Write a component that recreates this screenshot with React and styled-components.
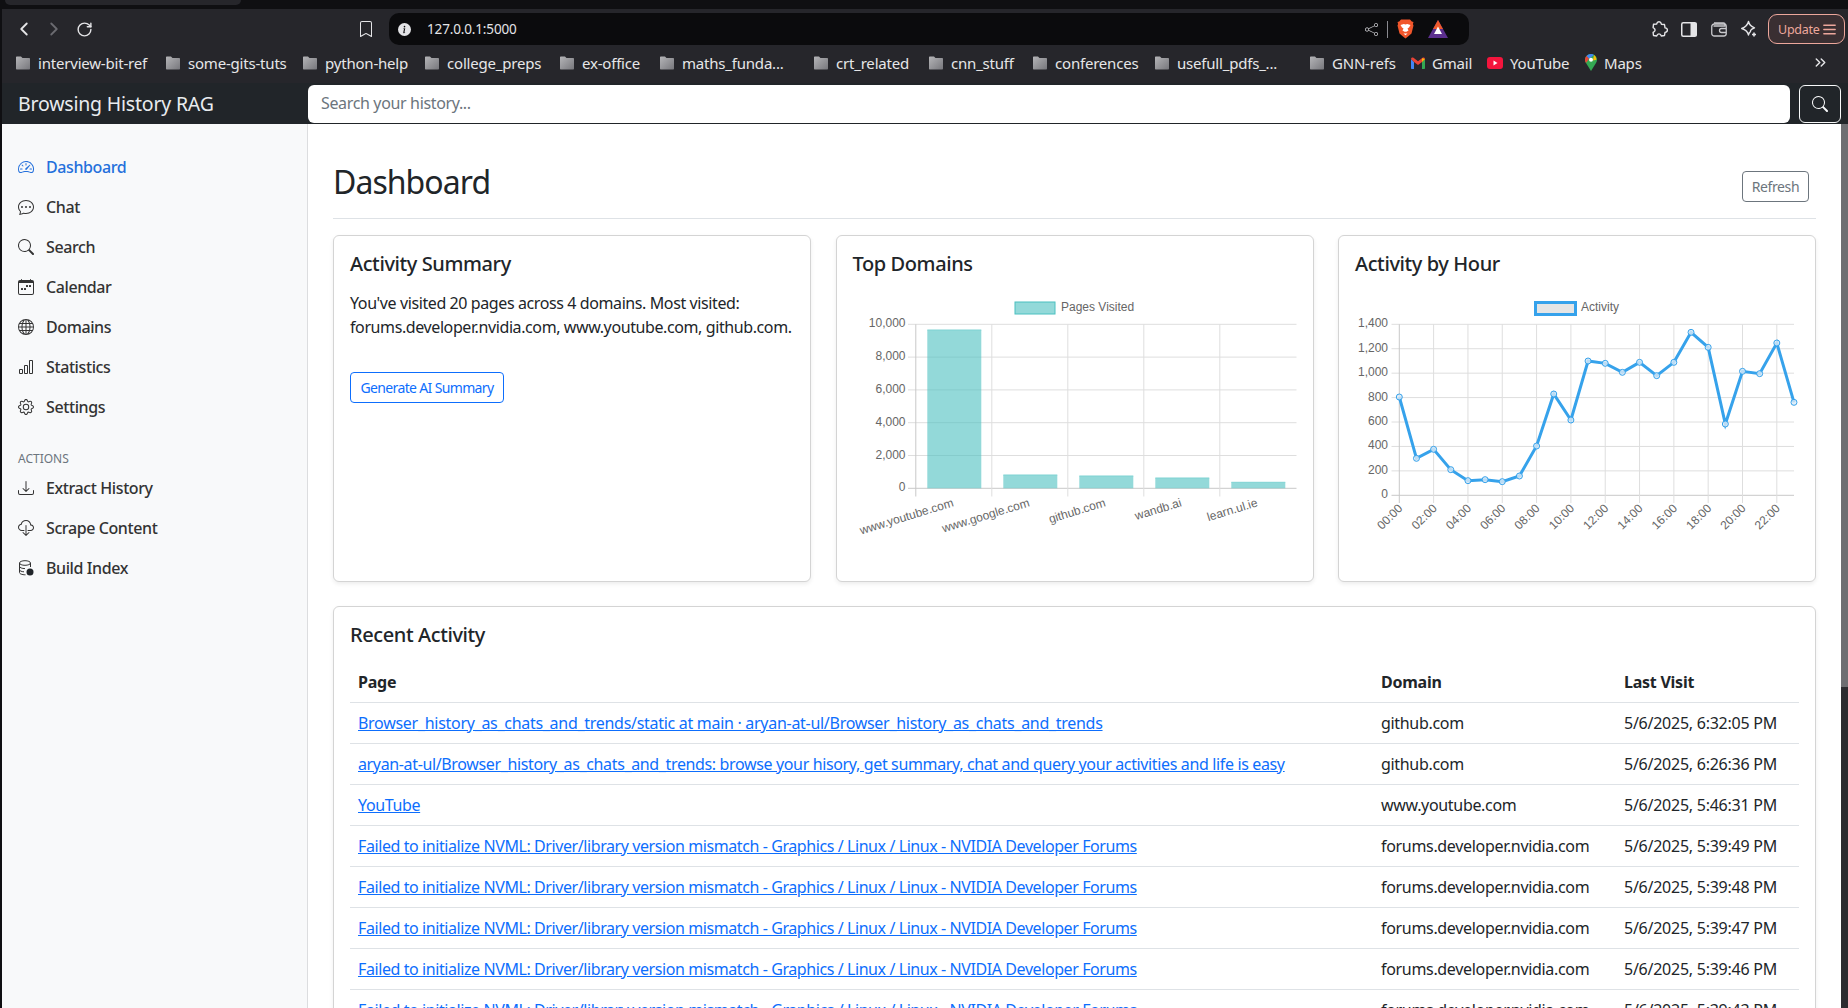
import styled, { createGlobalStyle } from "styled-components";
import {
  BsSpeedometer2,
  BsChatDots,
  BsSearch,
  BsCalendarWeek,
  BsGlobe,
  BsBarChart,
  BsGear,
  BsDownload,
  BsCloudDownload,
  BsInfoCircleFill,
  BsBookmark,
  BsShare,
} from "react-icons/bs";
import { LuChevronLeft, LuChevronRight, LuRotateCw, LuMenu, LuChevronsRight } from "react-icons/lu";

const UI_FONT = `"Noto Sans", "DejaVu Sans", sans-serif`;
const CHART_FONT = `"Liberation Sans", Arial, sans-serif`;

const GlobalStyle = createGlobalStyle`
  html, body {
    margin: 0;
    height: 100%;
    overflow: hidden;
    background: #fff;
  }
  * { box-sizing: border-box; }
  body {
    font-family: ${UI_FONT};
    font-size: 16px;
    letter-spacing: -0.25px;
    color: #212529;
  }
`;

const Screen = styled.div`
  width: 1848px;
  height: 1008px;
  display: flex;
  flex-direction: column;
  overflow: hidden;
  background: #0f0f12;
  border-left: 2px solid #0f0f12;
`;

const TabStrip = styled.div`
  height: 9px;
  flex: none;
  padding-left: 3px;
`;

const ActiveTab = styled.div`
  width: 236px;
  height: 5px;
  background: #26262b;
  border-radius: 0 0 8px 8px;
`;

const Toolbar = styled.div`
  height: 40px;
  flex: none;
  background: #26262b;
  display: grid;
  grid-template-columns: 387px 1080px 1fr;
  align-items: center;
`;

const ToolGroup = styled.div`
  display: flex;
  align-items: center;
  height: 100%;
  padding-left: ${(p) => p.$pad || 0}px;
`;

const ToolIcon = styled.span`
  width: 30px;
  height: 30px;
  flex: none;
  display: flex;
  align-items: center;
  justify-content: center;
  font-size: ${(p) => p.$size || 20}px;
  color: ${(p) => p.$color || "#e4e4e7"};
  margin-left: ${(p) => p.$left || 0}px;
`;

const AddressBar = styled.div`
  height: 32px;
  background: #0b0b0d;
  border-radius: 10px;
  display: flex;
  align-items: center;
  padding: 0 16px 0 9px;
  color: #e4e4e7;
`;

const Url = styled.span`
  font-size: 13.5px;
  letter-spacing: -0.15px;
  margin-left: 16px;
`;

const AddressEnd = styled.div`
  margin-left: auto;
  display: flex;
  align-items: center;
`;

const Divider = styled.span`
  width: 1px;
  height: 17px;
  background: #8a8a90;
  margin: 0 2px 0 1px;
`;

const UpdateButton = styled.div`
  width: 77px;
  height: 30px;
  margin-left: 4px;
  padding-left: 9px;
  background: #3a2f32;
  border: 1px solid #eda79c;
  border-radius: 9px;
  color: #eda79c;
  font-size: 12.5px;
  display: flex;
  align-items: center;
  gap: 1px;
`;

const BookmarkBar = styled.div`
  height: 34px;
  flex: none;
  background: #26262b;
  display: flex;
  align-items: center;
  padding: 0 0 7px 13px;
  color: #e6e6e8;
  font-size: 15px;
  letter-spacing: -0.2px;
`;

const Bookmark = styled.div`
  width: ${(p) => p.$width}px;
  flex: none;
  display: flex;
  align-items: center;
  gap: 7px;
  white-space: nowrap;
  svg { flex: none; }
`;

const Overflow = styled.span`
  margin-left: 17px;
  font-size: 17px;
  display: flex;
`;

const Navbar = styled.div`
  height: 41px;
  flex: none;
  background: #212529;
  display: flex;
  align-items: center;
  color: #fff;
`;

const Brand = styled.div`
  width: 306px;
  flex: none;
  padding-left: 16px;
  font-size: 19.5px;
  letter-spacing: -0.2px;
  color: #e9ecef;
`;

const SearchInput = styled.input`
  width: 1482px;
  height: 38px;
  border: 0;
  border-radius: 6px;
  padding: 0 13px 2px;
  font: inherit;
  letter-spacing: -0.35px;
  background: #fff;
  &::placeholder { color: #6c757d; opacity: 1; }
`;

const SearchButton = styled.button`
  width: 42px;
  height: 38px;
  margin-left: 9px;
  background: transparent;
  border: 1px solid #f8f9fa;
  border-radius: 6px;
  color: #f8f9fa;
  font-size: 16px;
  display: flex;
  align-items: center;
  justify-content: center;
`;

const Body = styled.div`
  flex: 1;
  min-height: 0;
  display: flex;
  background: #fff;
`;

const Sidebar = styled.nav`
  width: 306px;
  flex: none;
  background: #f8f9fa;
  border-right: 1px solid #dcdddf;
  padding-top: 23px;
`;

const NavLink = styled.div`
  height: 40px;
  padding: 0 16px;
  display: flex;
  align-items: center;
  gap: 12px;
  font-weight: 500;
  letter-spacing: -0.4px;
  color: ${(p) => (p.$active ? "#2470dc" : "#333")};
  svg { flex: none; font-size: 16px; }
`;

const SideHeading = styled.div`
  margin: 23px 0 0 16px;
  height: 18px;
  font-size: 12px;
  line-height: 18px;
  letter-spacing: 0;
  text-transform: uppercase;
  color: #6c757d;
`;

const Main = styled.main`
  flex: 1;
  min-width: 0;
  padding: 39px 25px 0;
  overflow: hidden;
`;

const PageHeader = styled.div`
  display: flex;
  justify-content: space-between;
  align-items: center;
  padding-bottom: 9px;
  border-bottom: 1px solid #dee2e6;
  margin-bottom: 16px;
`;

const PageTitle = styled.h1`
  margin: 0 0 8px;
  font-size: 32px;
  line-height: 38px;
  font-weight: 400;
  letter-spacing: -0.95px;
`;

const RefreshButton = styled.button`
  height: 31px;
  width: 67px;
  margin-right: 7px;
  padding: 0;
  background: #fff;
  border: 1px solid #6c757d;
  border-radius: 4px;
  color: #6c757d;
  font: inherit;
  font-size: 14px;
  letter-spacing: -0.4px;
`;

const CardGrid = styled.div`
  display: grid;
  grid-template-columns: repeat(3, 1fr);
  column-gap: 24.5px;
  margin-bottom: 24px;
`;

const Card = styled.section`
  height: ${(p) => (p.$fill ? "auto" : "347px")};
  background: #fff;
  border: 1px solid #d4d4d4;
  border-radius: 6px;
  box-shadow: 0 2px 4px rgba(0, 0, 0, 0.075);
  padding: 16px;
  overflow: hidden;
`;

const CardTitle = styled.h5`
  margin: 0;
  font-size: 20px;
  line-height: 24px;
  font-weight: 500;
  letter-spacing: -0.4px;
`;

const SummaryText = styled.p`
  margin: 15px 0 33px;
  line-height: 24px;
  letter-spacing: -0.4px;
`;

const OutlineButton = styled.button`
  width: 154px;
  height: 31px;
  padding: 0;
  background: #fff;
  border: 1px solid #0d6efd;
  border-radius: 4px;
  color: #0d6efd;
  font: inherit;
  font-size: 14px;
  letter-spacing: -0.65px;
`;

const ChartSvg = styled.svg`
  display: block;
  width: 444px;
  height: 290px;
  font-family: ${CHART_FONT};
  letter-spacing: 0;
  text { font-size: 12px; fill: #666; }
`;

const Table = styled.table`
  width: 100%;
  margin-top: 15px;
  border-collapse: collapse;
  table-layout: fixed;
  th, td {
    padding: 8px;
    line-height: 24px;
    text-align: left;
    border-bottom: 1px solid #dee2e6;
    white-space: nowrap;
    overflow: hidden;
  }
  th { font-weight: 700; }
  td { color: #212529; }
`;

const PageLink = styled.a`
  color: #0d6efd;
  text-decoration: underline;
  letter-spacing: ${(p) => p.$spacing}px;
`;

const DomainCell = styled.td`
  letter-spacing: -0.32px;
`;

const Scrollbar = styled.div`
  width: 7px;
  flex: none;
  background: #2c2c30;
`;

const ScrollThumb = styled.div`
  height: 563px;
  background: #6e6e72;
`;

function FolderIcon() {
  return (
    <svg width="16" height="14" viewBox="0 0 16 14">
      <defs>
        <linearGradient id="folderFill" x1="0" x2="1" y1="0" y2="1">
          <stop offset="0" stopColor="#b5b5b8" />
          <stop offset="1" stopColor="#77777c" />
        </linearGradient>
      </defs>
      <path d="M1 1.5C1 .9 1.4.5 2 .5h4l1.5 1.5H14c.6 0 1 .4 1 1v9.5c0 .6-.4 1-1 1H2c-.6 0-1-.4-1-1z" fill="url(#folderFill)" />
    </svg>
  );
}

function GmailIcon() {
  return (
    <svg width="14" height="12" viewBox="0 0 14 12">
      <path d="M0 2v9c0 .6.4 1 1 1h2V5z" fill="#4285f4" />
      <path d="M11 5v7h2c.6 0 1-.4 1-1V2z" fill="#34a853" />
      <path d="M3 5 0 2C0 .5 1.5 0 2.500.8L7 4.300l4.500-3.500C12.500 0 14 .5 14 2l-3 3-4 3z" fill="#ea4335" />
      <path d="M11 1.200 14 2l-3 3z" fill="#fbbc04" />
    </svg>
  );
}

function YoutubeIcon() {
  return (
    <svg width="16" height="12" viewBox="0 0 16 12">
      <rect width="16" height="12" rx="3" fill="#f4153d" />
      <path d="M6.500 3.500v5l4-2.500z" fill="#fff" />
    </svg>
  );
}

function MapsIcon() {
  return (
    <svg width="12" height="17" viewBox="0 0 12 17">
      <path d="M6 0C2.700 0 0 2.600 0 5.800c0 1.200.4 2.300 1 3.200L6 17l5-8c.6-.9 1-2 1-3.200C12 2.600 9.300 0 6 0z" fill="#34a853" />
      <path d="M6 0C4.200 0 2.600.8 1.500 2L4 4.800 9 1c-.9-.6-1.900-1-3-1z" fill="#4285f4" />
      <path d="M9 1 8 6.500l3.400-.7C11.500 3.900 10.500 2 9 1z" fill="#fbbc04" />
      <path d="M1.500 2C.6 3 0 4.300 0 5.800c0 1.200.4 2.300 1 3.200l3-4.200z" fill="#ea4335" />
      <circle cx="6" cy="5.800" r="2" fill="#fff" />
    </svg>
  );
}

function BraveIcon() {
  return (
    <svg width="17" height="20" viewBox="0 0 17 20">
      <path d="M4 .5h9l1.800 2 1.700.5-.6 2 .6 1.500-2 8-3.500 3-2.500 2-2.500-2-3.500-3-2-8 .6-1.500-.6-2 1.700-.5z" fill="#f1562b" />
      <path d="M3.500 6 6.800 5l1.700.6 1.700-.6 3.300 1-1.500 2.600-1.500 1 1 2-2.100 1.200H7.600L5.500 11.600l1-2-1.500-1z" fill="#fff" />
      <path d="M6.500 14.500h4l-2 1.800z" fill="#fff" />
    </svg>
  );
}

function RewardsIcon() {
  return (
    <svg width="20" height="18" viewBox="0 0 20 18">
      <path d="M10 0 20 18H0z" fill="#5c2f8e" />
      <path d="M10 0 15 9H5z" fill="#ef5a2b" />
      <path d="M10 6.500 14 14H6z" fill="#fff" />
    </svg>
  );
}

function PuzzleIcon() {
  return (
    <svg width="18" height="18" viewBox="0 0 18 18" fill="none" stroke="#e4e4e7" strokeWidth="1.400" strokeLinejoin="round">
      <path d="M7 3a2.200 2.200 0 0 1 4 0l.3 1.200 3.200.3.5 3.300 1.200.4a2.100 2.100 0 0 1 0 3.800l-1.200.4-.5 3.100-3.200.5-.5-1a2 2 0 0 0-3.600 0l-.5 1-3.200-.5-.4-3.100 1-.7a2 2 0 0 0 0-3.400l-1-.7.4-3.300 3.200-.3z" />
    </svg>
  );
}

function PanelIcon() {
  return (
    <svg width="16" height="15" viewBox="0 0 16 15">
      <rect x=".75" y=".75" width="14.500" height="13.500" rx="1.500" fill="none" stroke="#e4e4e7" strokeWidth="1.500" />
      <rect x="9.500" y="1" width="6" height="13" fill="#e4e4e7" />
    </svg>
  );
}

function WalletIcon() {
  return (
    <svg width="16" height="15" viewBox="0 0 16 15" fill="none" stroke="#c9c9cd" strokeWidth="1.300">
      <path d="M3 1h9.500c1 0 1.500.6 1.500 1.500V4H2.500" />
      <rect x=".75" y="2" width="14.500" height="12" rx="2.500" />
      <path d="M15 6.500H10.500a2 2 0 0 0 0 4H15" />
    </svg>
  );
}

function StarsIcon() {
  return (
    <svg width="18" height="18" viewBox="0 0 18 18" fill="none" stroke="#e4e4e7" strokeWidth="1.400" strokeLinejoin="round">
      <path d="M8.500 1.500c.6 3.200 2 4.800 6 6.300-2.600 1-3.600 1.500-3.800 2.700l-.4 1.200c-.8.600-1.500 1.500-1.800 3.300-.7-3.500-2.400-5.200-6.800-6.500 3.700-1.200 5.800-3 6.800-7z" />
      <path d="M14 12.500v4M12 14.500h4" strokeWidth="1.600" />
    </svg>
  );
}

function DatabaseDotIcon() {
  return (
    <svg width="16" height="16" viewBox="0 0 16 16" fill="none" stroke="#333" strokeWidth="1">
      <ellipse cx="7" cy="3" rx="5.500" ry="2.300" />
      <path d="M1.500 3v9.500c0 1.300 2.500 2.300 6 2.300M12.500 3v4M1.500 6.300c0 1.300 2.500 2.300 5.500 2.300M1.500 9.600c0 1.200 2 2.100 4.500 2.200" />
      <circle cx="12" cy="12" r="3.500" fill="#212529" stroke="none" />
    </svg>
  );
}

const BOOKMARKS = [
  ["interview-bit-ref", 150],
  ["some-gits-tuts", 137],
  ["python-help", 122],
  ["college_preps", 135],
  ["ex-office", 100],
  ["maths_funda...", 154],
  ["crt_related", 115],
  ["cnn_stuff", 104],
  ["conferences", 122],
  ["usefull_pdfs_...", 155],
];

const NAV_ITEMS = [
  [BsSpeedometer2, "Dashboard", true],
  [BsChatDots, "Chat"],
  [BsSearch, "Search"],
  [BsCalendarWeek, "Calendar"],
  [BsGlobe, "Domains"],
  [BsBarChart, "Statistics"],
  [BsGear, "Settings"],
];

const ACTION_ITEMS = [
  [BsDownload, "Extract History"],
  [BsCloudDownload, "Scrape Content"],
  [DatabaseDotIcon, "Build Index"],
];

const NVIDIA_TITLE = "Failed to initialize NVML: Driver/library version mismatch - Graphics / Linux / Linux - NVIDIA Developer Forums";
const NVIDIA_DOMAIN = "forums.developer.nvidia.com";

// last value: letter spacing that brings the link to the reference width
const ROWS = [
  ["Browser_history_as_chats_and_trends/static at main · aryan-at-ul/Browser_history_as_chats_and_trends", "github.com", "5/6/2025, 6:32:05 PM", -0.29],
  ["aryan-at-ul/Browser_history_as_chats_and_trends: browse your hisory, get summary, chat and query your activities and life is easy", "github.com", "5/6/2025, 6:26:36 PM", -0.36],
  ["YouTube", "www.youtube.com", "5/6/2025, 5:46:31 PM", -0.36],
  [NVIDIA_TITLE, NVIDIA_DOMAIN, "5/6/2025, 5:39:49 PM", -0.415],
  [NVIDIA_TITLE, NVIDIA_DOMAIN, "5/6/2025, 5:39:48 PM", -0.415],
  [NVIDIA_TITLE, NVIDIA_DOMAIN, "5/6/2025, 5:39:47 PM", -0.415],
  [NVIDIA_TITLE, NVIDIA_DOMAIN, "5/6/2025, 5:39:46 PM", -0.415],
  [NVIDIA_TITLE, NVIDIA_DOMAIN, "5/6/2025, 5:39:43 PM", -0.415],
];

const GRID = "#dedede";
const AXIS = "#c8c8c8";

const BAR_LEFT = 915.3;
const BAR_STEP = 76;
const BAR_TOP = 324.3;
const BAR_BOTTOM = 488.3;
const BARS = [
  ["www.youtube.com", 330],
  ["www.google.com", 475],
  ["github.com", 476],
  ["wandb.ai", 478],
  ["learn.ul.ie", 482.3],
];

function BarChart() {
  const ticks = ["10,000", "8,000", "6,000", "4,000", "2,000", "0"];
  return (
    <ChartSvg viewBox="852.5 276 444 290">
      <rect x="1014.5" y="302" width="40" height="12" fill="rgba(75,192,192,0.6)" stroke="#4bc0c0" />
      <text x="1060.5" y="311">Pages Visited</text>
      {ticks.map((label, i) => {
        const y = BAR_TOP + (i * (BAR_BOTTOM - BAR_TOP)) / 5;
        return (
          <g key={label}>
            <line x1="907.5" x2="1296" y1={y} y2={y} stroke={i === 5 ? AXIS : GRID} />
            <text x="905" y={y + 3} textAnchor="end">{label}</text>
          </g>
        );
      })}
      {[0, 1, 2, 3, 4].map((i) => (
        <line key={i} x1={BAR_LEFT + i * BAR_STEP} x2={BAR_LEFT + i * BAR_STEP} y1={BAR_TOP} y2="496.5" stroke={i === 0 ? AXIS : GRID} />
      ))}
      {BARS.map(([label, top], i) => {
        const x = BAR_LEFT + 11.5 + i * BAR_STEP;
        return (
          <g key={label}>
            <rect x={x} y={top} width="54" height={BAR_BOTTOM - top} fill="rgba(75,192,192,0.6)" />
            <line x1={x} x2={x + 54} y1={top} y2={top} stroke="#7fd3d3" />
            <text transform={`translate(${x + 27},${506}) rotate(-17)`} textAnchor="end">{label}</text>
          </g>
        );
      })}
    </ChartSvg>
  );
}

// y positions read off the reference at 3x, turned back into page pixels
const HOUR_Y = [501, 685, 658, 719, 752, 749, 755, 738, 648, 492, 570, 393, 400, 427, 397, 437, 397, 307, 352, 582, 424, 431, 339, 517];
const hourX = (i) => 1399.3 + i * 17.16;
const hourY = (i) => 230 + HOUR_Y[i] / 3;

function LineChart() {
  const ticks = ["1,400", "1,200", "1,000", "800", "600", "400", "200", "0"];
  const top = 324.3;
  const bottom = 495.3;
  const points = HOUR_Y.map((_, i) => `${hourX(i)},${hourY(i)}`).join(" ");
  return (
    <ChartSvg viewBox="1355 276 444 290">
      <rect x="1535.5" y="302.500" width="40" height="12" fill="rgba(0,0,0,0.1)" stroke="#36a2eb" strokeWidth="3" />
      <text x="1581" y="311">Activity</text>
      {ticks.map((label, i) => {
        const y = top + (i * (bottom - top)) / 7;
        return (
          <g key={label}>
            <line x1="1391.500" x2="1794" y1={y} y2={y} stroke={i === 7 ? AXIS : GRID} />
            <text x="1388" y={y + 3} textAnchor="end">{label}</text>
          </g>
        );
      })}
      {HOUR_Y.map((_, i) =>
        i % 2 === 0 ? (
          <g key={i}>
            <line x1={hourX(i)} x2={hourX(i)} y1={top} y2="503" stroke={i === 0 ? AXIS : GRID} />
            <text transform={`translate(${hourX(i) + 4},${509}) rotate(-45)`} textAnchor="end">
              {`${String(i).padStart(2, "0")}:00`}
            </text>
          </g>
        ) : null
      )}
      <polyline points={points} fill="none" stroke="#36a2eb" strokeWidth="3" strokeLinejoin="miter" />
      {HOUR_Y.map((_, i) => (
        <circle key={i} cx={hourX(i)} cy={hourY(i)} r="3" fill="rgba(220,235,248,0.8)" stroke="#36a2eb" />
      ))}
    </ChartSvg>
  );
}

function NavEntry({ icon: Icon, label, active }) {
  return (
    <NavLink $active={active}>
      <Icon />
      {label}
    </NavLink>
  );
}

export default function App() {
  return (
    <Screen>
      <GlobalStyle />
      <TabStrip>
        <ActiveTab />
      </TabStrip>
      <Toolbar>
        <ToolGroup $pad={7}>
          <ToolIcon $size={22}><LuChevronLeft /></ToolIcon>
          <ToolIcon $size={22} $color="#6a6a70"><LuChevronRight /></ToolIcon>
          <ToolIcon $size={17}><LuRotateCw /></ToolIcon>
          <ToolIcon $size={16} $left={252}><BsBookmark /></ToolIcon>
        </ToolGroup>
        <AddressBar>
          <BsInfoCircleFill size={13} />
          <Url>127.0.0.1:5000</Url>
          <AddressEnd>
            <ToolIcon $size={13} $color="#b8b8bc"><BsShare /></ToolIcon>
            <Divider />
            <ToolIcon $size={18}><BraveIcon /></ToolIcon>
            <ToolIcon $size={18} $left={3}><RewardsIcon /></ToolIcon>
          </AddressEnd>
        </AddressBar>
        <ToolGroup $pad={175}>
          <ToolIcon><PuzzleIcon /></ToolIcon>
          <ToolIcon><PanelIcon /></ToolIcon>
          <ToolIcon><WalletIcon /></ToolIcon>
          <ToolIcon><StarsIcon /></ToolIcon>
          <UpdateButton>Update<LuMenu size={17} /></UpdateButton>
        </ToolGroup>
      </Toolbar>
      <BookmarkBar>
        {BOOKMARKS.map(([name, width]) => (
          <Bookmark key={name} $width={width}><FolderIcon />{name}</Bookmark>
        ))}
        <Bookmark $width={102}><FolderIcon />GNN-refs</Bookmark>
        <Bookmark $width={76}><GmailIcon />Gmail</Bookmark>
        <Bookmark $width={98}><YoutubeIcon />YouTube</Bookmark>
        <Bookmark $width={210}><MapsIcon />Maps</Bookmark>
        <Overflow><LuChevronsRight /></Overflow>
      </BookmarkBar>
      <Navbar>
        <Brand>Browsing History RAG</Brand>
        <SearchInput placeholder="Search your history..." />
        <SearchButton><BsSearch /></SearchButton>
      </Navbar>
      <Body>
        <Sidebar>
          {NAV_ITEMS.map(([icon, label, active]) => (
            <NavEntry key={label} icon={icon} label={label} active={active} />
          ))}
          <SideHeading>Actions</SideHeading>
          {ACTION_ITEMS.map(([icon, label]) => (
            <NavEntry key={label} icon={icon} label={label} />
          ))}
        </Sidebar>
        <Main>
          <PageHeader>
            <PageTitle>Dashboard</PageTitle>
            <RefreshButton>Refresh</RefreshButton>
          </PageHeader>
          <CardGrid>
            <Card>
              <CardTitle>Activity Summary</CardTitle>
              <SummaryText>
                You've visited 20 pages across 4 domains. Most visited: forums.developer.nvidia.com, www.youtube.com, github.com.
              </SummaryText>
              <OutlineButton>Generate AI Summary</OutlineButton>
            </Card>
            <Card>
              <CardTitle>Top Domains</CardTitle>
              <BarChart />
            </Card>
            <Card>
              <CardTitle>Activity by Hour</CardTitle>
              <LineChart />
            </Card>
          </CardGrid>
          <Card $fill>
            <CardTitle>Recent Activity</CardTitle>
            <Table>
              <colgroup>
                <col width="1023" />
                <col width="243" />
                <col width="183" />
              </colgroup>
              <thead>
                <tr><th>Page</th><th>Domain</th><th>Last Visit</th></tr>
              </thead>
              <tbody>
                {ROWS.map(([page, domain, visit, spacing]) => (
                  <tr key={visit}>
                    <td><PageLink href="#" $spacing={spacing}>{page}</PageLink></td>
                    <DomainCell>{domain}</DomainCell>
                    <td>{visit}</td>
                  </tr>
                ))}
              </tbody>
            </Table>
          </Card>
        </Main>
        <Scrollbar>
          <ScrollThumb />
        </Scrollbar>
      </Body>
    </Screen>
  );
}
